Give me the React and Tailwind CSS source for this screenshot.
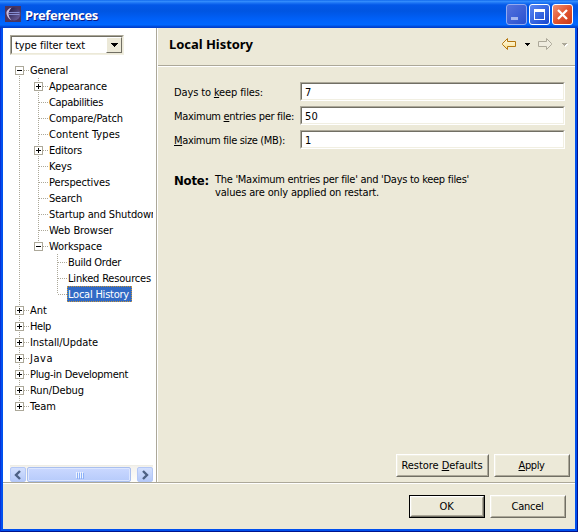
import React, { useLayoutEffect, useRef, useState } from "react";

// Text run whose letter spacing is adjusted so that it fills the given width.
function Fit({ w, className = "", children }) {
  const ref = useRef(null);
  const [sp, setSp] = useState(0);
  useLayoutEffect(() => {
    const el = ref.current;
    const n = el.textContent.length;
    setSp((w - el.getBoundingClientRect().width) / n);
  }, [w]);
  return (
    <span ref={ref} className={"inline-block whitespace-pre " + className} style={{ letterSpacing: sp + "px" }}>
      {children}
    </span>
  );
}

const U = ({ children }) => <span className="underline underline-offset-[1px] decoration-1">{children}</span>;

const ROWS = [
  [0, "-", "General", 38],
  [1, "+", "Appearance", 58],
  [1, "", "Capabilities", 54],
  [1, "", "Compare/Patch", 74],
  [1, "", "Content Types", 71],
  [1, "+", "Editors", 33],
  [1, "", "Keys", 23],
  [1, "", "Perspectives", 61],
  [1, "", "Search", 33],
  [1, "", "Startup and Shutdown", 108],
  [1, "", "Web Browser", 64],
  [1, "-", "Workspace", 53],
  [2, "", "Build Order", 53],
  [2, "", "Linked Resources", 83],
  [2, "", "Local History", 61],
  [0, "+", "Ant", 17],
  [0, "+", "Help", 21],
  [0, "+", "Install/Update", 68],
  [0, "+", "Java", 23],
  [0, "+", "Plug-in Development", 98],
  [0, "+", "Run/Debug", 54],
  [0, "+", "Team", 26],
];

function Guides({ i }) {
  const [level, sign, name] = ROWS[i];
  const cx = [9.5, 28.5, 47.5][level];
  const dot = { stroke: "#aca899", strokeWidth: 1, strokeDasharray: "1 1" };
  const last = name === "Workspace" || name === "Local History" || name === "Team";
  return (
    <svg width={level === 0 ? 19 : level === 1 ? 38 : 57} height="16" className="block shrink-0" shapeRendering="crispEdges">
      {level > 0 && <line x1="9.5" x2="9.5" y1="0" y2="16" {...dot} />}
      <line x1={cx} x2={cx} y1={i === 0 ? 8 : 0} y2={last ? 8 : 16} {...dot} />
      <line x1={cx + 0.5} x2={cx + 9.5} y1="8.5" y2="8.5" {...dot} />
      {sign && (
        <>
          <rect x={cx - 4} y="4.5" width="8" height="8" fill="#fff" stroke="#aca899" />
          <line x1={cx - 2.5} x2={cx + 2.5} y1="8.5" y2="8.5" stroke="#000" />
          {sign === "+" && <line x1={cx} x2={cx} y1="6" y2="11" stroke="#000" />}
        </>
      )}
    </svg>
  );
}

function Tree() {
  return (
    <div className="mt-[7px] ml-[7px] w-[143px] h-[403px] overflow-hidden">
      {ROWS.map(([, , name, w], i) => (
        <div key={name} className="flex h-4">
          <Guides i={i} />
          {name === "Local History" ? (
            <div className="h-4 shrink-0 pl-[1px] pr-[3px] bg-[#316ac5] text-white leading-[17px] outline-dotted outline-1 -outline-offset-1 outline-[#c99538]">
              <Fit w={w}>{name}</Fit>
            </div>
          ) : (
            <div className="shrink-0 pl-[1px] leading-[17px]"><Fit w={w}>{name}</Fit></div>
          )}
        </div>
      ))}
    </div>
  );
}

function ScrollBar() {
  const box = "w-4 h-[15px] rounded-[2px] border border-[#b4c8f6] bg-linear-to-b from-[#d3e0fe] to-[#b5c9f8] flex items-center justify-center";
  return (
    <div className="ml-[7px] w-[143px] h-[17px] pt-[1px] border-t border-[#eeede5] bg-linear-to-b from-[#f3f1ec] to-[#fefefb] flex">
      <div className={box}>
        <svg width="8" height="10"><path d="M6 1L2 5l4 4" fill="none" stroke="#4d6185" strokeWidth="2.4" /></svg>
      </div>
      <div className="ml-[1px] w-[104px] h-[15px] rounded-[2px] border border-[#a9bfee] bg-linear-to-b from-[#cad8ff] to-[#b7cbfb] shadow-[inset_0_0_0_1px_#dce6ff] flex items-center justify-center gap-[1px]">
        {[0, 1, 2, 3].map((k) => <div key={k} className="w-[1px] h-[6px] bg-[#eef4fe] shadow-[1px_1px_0_#8cb0f8]" />)}
      </div>
      <div className={box + " ml-auto"}>
        <svg width="8" height="10"><path d="M2 1l4 4-4 4" fill="none" stroke="#4d6185" strokeWidth="2.4" /></svg>
      </div>
    </div>
  );
}

function Field({ children, w, value }) {
  return (
    <div className="flex h-[19px] items-stretch">
      <div className="w-[126px] leading-[22px]"><Fit w={w}>{children}</Fit></div>
      <div className="w-[265px] border border-t-[#aca899] border-l-[#aca899] border-r-white border-b-white">
        <div className="h-full bg-white border border-t-[#716f64] border-l-[#716f64] border-r-[#f1efe2] border-b-[#f1efe2] pl-[3px] leading-[18px]">
          <Fit w={value.length * 6.5}>{value}</Fit>
        </div>
      </div>
    </div>
  );
}

function Button({ className = "", w, primary, children }) {
  const bevel = (
    <div className="flex-1 border border-t-white border-l-white border-r-[#716f64] border-b-[#716f64] flex">
      <div className="flex-1 border border-t-[#f1efe2] border-l-[#f1efe2] border-r-[#aca899] border-b-[#aca899] flex items-center justify-center">
        <Fit w={w} className="leading-[15px] mr-[1px]">{children}</Fit>
      </div>
    </div>
  );
  return <div className={"h-[23px] flex " + (primary ? "border border-black " : "") + className}>{bevel}</div>;
}

function TitleBar() {
  const b = "w-[21px] h-[21px] rounded-[3px] border flex items-center justify-center ";
  return (
    <div className="h-7 shrink-0 flex items-start pl-[5px] pr-[5px] bg-[linear-gradient(to_bottom,#0058e6_0px,#3a93ff_1px,#1b73f4_3px,#0358e8_5px,#0055e2_11px,#0060f8_19px,#0067ff_25px,#0050df_26px,#003bc8_28px)]">
      <svg width="16" height="16" viewBox="0 0 16 16" className="mt-[6px]">
        <defs>
          <linearGradient id="ec" x1="0" y1="0" x2="1" y2="1">
            <stop offset="0" stopColor="#1c1440" /><stop offset="1" stopColor="#7468a4" />
          </linearGradient>
        </defs>
        <rect width="16" height="16" fill="#4a3560" />
        <circle cx="9" cy="8" r="6.5" fill="url(#ec)" />
        <path d="M6.5 1.5Q.5 4 1.5 8T6.500 14.500Q3.500 11 3.500 8T6.500 1.500" fill="#c9bde0" />
        <path d="M3.500 6.500h11M3.500 8.500h11" stroke="#8f96dc" strokeWidth=".9" />
      </svg>
      <div className="mt-[7px] ml-[4px] font-['Noto_Sans'] text-[13px] leading-[16px] font-bold text-white [text-shadow:1px_1px_0_#0a1883]">
        <Fit w={73}>Preferences</Fit>
      </div>
      <div className="ml-auto mt-[4px] flex gap-[2px]">
        <div className={b + "border-[#93aaf0] bg-linear-to-br from-[#5572dd] to-[#2850cf]"}>
          <svg width="19" height="19" shapeRendering="crispEdges"><rect x="4" y="12" width="7" height="3" fill="#a4b6ef" /></svg>
        </div>
        <div className={b + "border-white bg-linear-to-br from-[#5a86f2] to-[#1645cf]"}>
          <svg width="19" height="19" shapeRendering="crispEdges"><path d="M4 4h11v11H4zM5 7v7h9V7z" fill="#fff" fillRule="evenodd" /></svg>
        </div>
        <div className={b + "border-white bg-linear-to-br from-[#ee8f72] via-[#e3552f] to-[#c8391a]"}>
          <svg width="19" height="19"><path d="M5 5l9 9M14 5l-9 9" stroke="#fff" strokeWidth="2.3" /></svg>
        </div>
      </div>
    </div>
  );
}

const ARROW = "M1.5 6.5L6.5 1.500V4.500H14.5V9.500H6.5V12.500L1.500 7.500Z";

export default function App() {
  return (
    <div className="w-[578px] h-[532px] flex flex-col overflow-hidden bg-[#0046e0] text-black text-[11px] font-['DejaVu_Sans_Condensed','DejaVu_Sans',sans-serif] [font-stretch:condensed]">
      <TitleBar />
      <div className="h-[504px] flex flex-col border-x border-b border-l-[#0831d9] border-r-[#00138c] border-b-[#00138c]">
        <div className="flex-1 flex flex-col border-x-2 border-b-2 border-[#0050ee] bg-[#ece9d8]">
          <div className="h-[454px] shrink-0 flex">
            <div className="w-[153px] bg-white flex flex-col">
              <div className="mt-[7px] ml-[7px] w-[114px] h-[20px] shrink-0 border border-t-[#aca899] border-l-[#aca899] border-r-[#f1efe2] border-b-[#f1efe2]">
                <div className="h-full border border-t-[#716f64] border-l-[#716f64] border-r-[#ece9d8] border-b-[#ece9d8] flex">
                  <div className="flex-1 pl-[3px] leading-[17px]"><Fit w={70}>type filter text</Fit></div>
                  <div className="w-[16px] bg-[#ece9d8] border border-t-white border-l-white border-r-[#716f64] border-b-[#716f64] flex items-center justify-center">
                    <svg width="7" height="4" shapeRendering="crispEdges"><path d="M0 0h7v1H0zM1 1h5v1H1zM2 2h3v1H2zM3 3h1v1H3z" /></svg>
                  </div>
                </div>
              </div>
              <Tree />
              <ScrollBar />
            </div>
            <div className="w-[1px] bg-[#aca899]" />
            <div className="w-[1px] bg-white" />
            <div className="flex-1 flex flex-col">
              <div className="h-[38px] shrink-0 border-b border-[#aca899] shadow-[0_1px_0_#fff] flex pl-[11px]">
                <div className="mt-[8px] font-['Noto_Sans'] font-bold text-[13px] leading-[17px]"><Fit w={84}>Local History</Fit></div>
                <div className="ml-auto mr-[7px] mt-[9px] flex items-start">
                  <svg width="16" height="14">
                    <defs>
                      <linearGradient id="ar" x1="0" y1="0" x2="0" y2="1"><stop offset="0" stopColor="#fffdf0" /><stop offset="1" stopColor="#f8df8a" /></linearGradient>
                    </defs>
                    <path d={ARROW} fill="url(#ar)" stroke="#b5770f" />
                  </svg>
                  <svg width="5" height="3" shapeRendering="crispEdges" className="mt-[6px] ml-[8px]"><path d="M0 0h5v1H0zM1 1h3v1H1zM2 2h1v1H2z" /></svg>
                  <svg width="16" height="14" className="ml-[7px]"><path d={ARROW} transform="translate(16 0) scale(-1 1)" fill="#efecdf" stroke="#aca899" /></svg>
                  <svg width="6" height="4" shapeRendering="crispEdges" className="mt-[6px] ml-[9px]">
                    <path d="M1 1h5v1H1zM2 2h3v1H2zM3 3h1v1H3z" fill="#fff" />
                    <path d="M0 0h5v1H0zM1 1h3v1H1zM2 2h1v1H2z" fill="#aca899" />
                  </svg>
                </div>
              </div>
              <div className="mt-[16px] ml-[16px] flex flex-col gap-[5px]">
                <Field w={89} value="7">Days to <U>k</U>eep files:</Field>
                <Field w={120} value="50">Maximum <U>e</U>ntries per file:</Field>
                <Field w={111} value="1"><U>M</U>aximum file size (MB):</Field>
              </div>
              <div className="mt-[24px] ml-[16px] flex">
                <div className="w-[41px] font-['DejaVu_Sans_Condensed','DejaVu_Sans'] font-bold text-[13px] leading-[16px]"><Fit w={35}>Note:</Fit></div>
                <div className="leading-[13px]">
                  <div><Fit w={254}>The 'Maximum entries per file' and 'Days to keep files'</Fit></div>
                  <div><Fit w={164}>values are only applied on restart.</Fit></div>
                </div>
              </div>
              <div className="mt-auto mb-[5px] mr-[5px] flex justify-end gap-[5px]">
                <Button className="w-[93px]" w={81}>Restore <U>D</U>efaults</Button>
                <Button className="w-[76px]" w={26}><U>A</U>pply</Button>
              </div>
            </div>
          </div>
          <div className="h-[2px] shrink-0 bg-white border-t border-[#aca899]" />
          <div className="flex-1 flex justify-end gap-[5px] pt-[11px] pr-[9px]">
            <Button className="w-[76px]" w={14} primary>OK</Button>
            <Button className="w-[76px]" w={32}>Cancel</Button>
          </div>
        </div>
      </div>
    </div>
  );
}
